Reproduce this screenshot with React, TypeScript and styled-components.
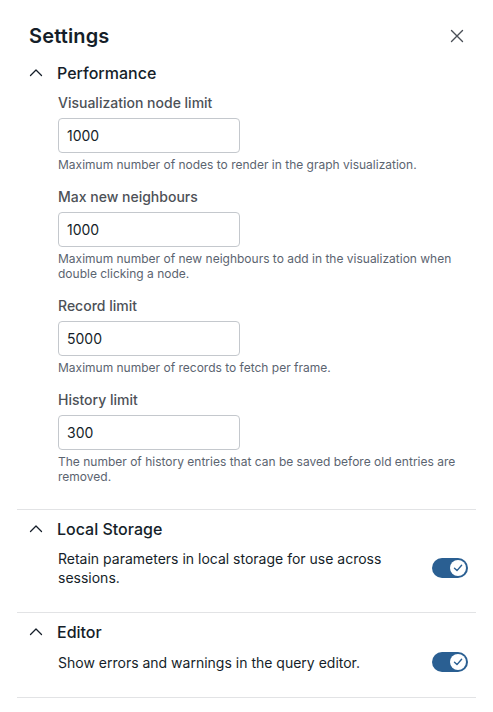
import { useState } from "react";
import styled, { createGlobalStyle } from "styled-components";

const GlobalStyle = createGlobalStyle`
    body {
        margin: 0;
        background: #ffffff;
        font-family: Inter, "Noto Sans", sans-serif;
        color: #151e29;
    }
`;

// Settings panel data.
type NumberSetting = {
    label: string;
    value: string;
    help: string;
};

const performanceSettings: NumberSetting[] = [
    { label: "Visualization node limit", value: "1000", help: "Maximum number of nodes to render in the graph visualization." },
    { label: "Max new neighbours", value: "1000", help: "Maximum number of new neighbours to add in the visualization when double clicking a node." },
    { label: "Record limit", value: "5000", help: "Maximum number of records to fetch per frame." },
    { label: "History limit", value: "300", help: "The number of history entries that can be saved before old entries are removed." },
];

const Panel = styled.div`
    width: 493px;
    box-sizing: border-box;
    padding: 22px 17px 0 17px;
`;

const Header = styled.div`
    display: flex;
    align-items: center;
    justify-content: space-between;
    padding: 0 10px 0 12px;
    height: 28px;
    margin-bottom: 4px;
`;

const Title = styled.h2`
    margin: 0;
    font-size: 20px;
    font-weight: 600;
    letter-spacing: 0.15px;
    color: #151e29;
`;

const IconButton = styled.button`
    border: none;
    background: none;
    padding: 0;
    width: 18px;
    height: 18px;
    display: flex;
    align-items: center;
    justify-content: center;
    color: #4a4f57;
    cursor: pointer;
`;

const Section = styled.section`
    border-bottom: 1px solid #e2e3e5;
    padding: 8px 0 25px 0;
`;

const SectionHeader = styled.div`
    display: flex;
    align-items: center;
    gap: 13px;
    padding-left: 11px;
    height: 22px;
`;

const SectionTitle = styled.h3`
    margin: 0;
    font-size: 16px;
    font-weight: 500;
    color: #151e29;
`;

const SectionBody = styled.div`
    padding-left: 41px;
    margin-top: 9px;
    display: flex;
    flex-direction: column;
    gap: 15px;
`;

const Field = styled.div`
    display: flex;
    flex-direction: column;
`;

const Label = styled.label`
    font-size: 14px;
    font-weight: 500;
    color: #4d5157;
    line-height: 20px;
    margin-bottom: 5px;
`;

const Input = styled.input`
    width: 182px;
    height: 35px;
    box-sizing: border-box;
    border: 1px solid #c4c8cd;
    border-radius: 4px;
    padding: 0 8px;
    font-family: inherit;
    font-size: 14px;
    color: #151e29;
    outline: none;
`;

const Help = styled.p`
    margin: 4px 0 0 0;
    font-size: 12px;
    line-height: 15px;
    color: #5b6470;
    max-width: 410px;
`;

const ToggleRow = styled.div`
    display: flex;
    align-items: center;
    justify-content: space-between;
    padding-right: 8px;
    gap: 20px;
`;

const ToggleText = styled.p`
    margin: 0;
    font-size: 14px;
    line-height: 19px;
    color: #151e29;
    max-width: 340px;
`;

const Track = styled.button<{ $on: boolean }>`
    flex-shrink: 0;
    width: 36px;
    height: 20px;
    border-radius: 10px;
    border: none;
    padding: 2px;
    display: flex;
    justify-content: ${({ $on }) => ($on ? "flex-end" : "flex-start")};
    align-items: center;
    background: ${({ $on }) => ($on ? "#2a5f92" : "#b2b7bd")};
    cursor: pointer;
`;

const Knob = styled.span`
    width: 16px;
    height: 16px;
    border-radius: 50%;
    background: #ffffff;
    display: flex;
    align-items: center;
    justify-content: center;
    color: #2a5f92;
`;

function Chevron() {
    return (
        <svg width="16" height="16" viewBox="0 0 16 16" fill="none">
            <path d="M2.5 10.5 L8 5 L13.5 10.5" stroke="#151e29" strokeWidth="1.3" strokeLinecap="round" strokeLinejoin="round" />
        </svg>
    );
}

function Toggle({ initial }: { initial: boolean }) {
    const [on, setOn] = useState(initial);
    return (
        <Track $on={on} onClick={() => setOn(!on)} aria-pressed={on}>
            <Knob>
                {on && (
                    <svg width="10" height="10" viewBox="0 0 10 10" fill="none">
                        <path d="M1.5 5.3 L4 7.6 L8.6 2.2" stroke="currentColor" strokeWidth="1.4" strokeLinecap="round" strokeLinejoin="round" />
                    </svg>
                )}
            </Knob>
        </Track>
    );
}

export default function App() {
    return (
        <Panel>
            <GlobalStyle />
            <Header>
                <Title>Settings</Title>
                <IconButton aria-label="Close">
                    <svg width="14" height="14" viewBox="0 0 14 14" fill="none">
                        <path d="M1.5 1.5 L12.5 12.5 M12.5 1.5 L1.5 12.5" stroke="currentColor" strokeWidth="1.4" strokeLinecap="round" />
                    </svg>
                </IconButton>
            </Header>

            <Section>
                <SectionHeader>
                    <Chevron />
                    <SectionTitle>Performance</SectionTitle>
                </SectionHeader>
                <SectionBody>
                    {performanceSettings.map((s) => (
                        <Field key={s.label}>
                            <Label>{s.label}</Label>
                            <Input defaultValue={s.value} />
                            <Help>{s.help}</Help>
                        </Field>
                    ))}
                </SectionBody>
            </Section>

            <Section>
                <SectionHeader>
                    <Chevron />
                    <SectionTitle>Local Storage</SectionTitle>
                </SectionHeader>
                <SectionBody>
                    <ToggleRow>
                        <ToggleText>Retain parameters in local storage for use across sessions.</ToggleText>
                        <Toggle initial={true} />
                    </ToggleRow>
                </SectionBody>
            </Section>

            <Section>
                <SectionHeader>
                    <Chevron />
                    <SectionTitle>Editor</SectionTitle>
                </SectionHeader>
                <SectionBody>
                    <ToggleRow>
                        <ToggleText>Show errors and warnings in the query editor.</ToggleText>
                        <Toggle initial={true} />
                    </ToggleRow>
                </SectionBody>
            </Section>
        </Panel>
    );
}
